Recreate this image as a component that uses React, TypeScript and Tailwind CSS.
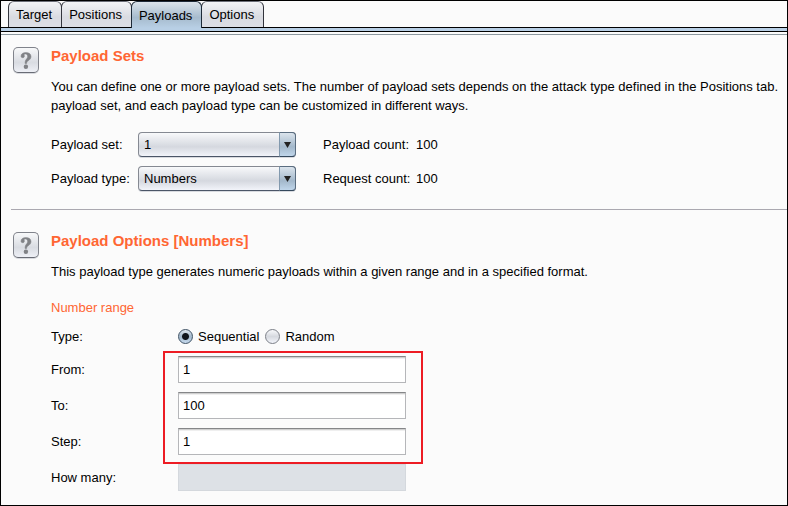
import { useState } from "react"
import type { ReactNode } from "react"
import clsx from "clsx"

const tabs = ["Target", "Positions", "Payloads", "Options"]

const HelpButton = () => (
  <button
    type="button"
    aria-label="Help"
    className="size-[26px] shrink-0 rounded-[5px] border border-[#80838b] border-b-[#696c75] bg-linear-to-b from-[#f8f9fa] via-[#d9dce2] via-60% to-[#eef0f6] shadow-[0_1px_0_#d8dadf]"
  >
    <svg viewBox="0 0 24 24" className="size-6">
      <path
        d="M7 8.2C7 5.9 9 4.6 11.8 4.6c3.3 0 5.2 1.5 5.2 4 0 2-1.2 3.1-2.7 4.1-1.2.8-1.7 1.5-1.7 2.9h-1.5c-.1-2.4.5-3.4 1.4-4.5.8-.9 1.1-1.5 1.1-2.6 0-1.6-.8-2.5-2.1-2.5-.9 0-1.4.3-1.4.8 0 .4.3.7.3 1.4 0 .9-.7 1.5-1.7 1.5S7 9.1 7 8.2z"
        fill="#808286"
        stroke="#808286"
        strokeWidth="0.5"
      />
      <circle cx="11.9" cy="18.7" r="2.2" fill="#808286" />
    </svg>
  </button>
)

const Section = ({ title, children }: { title: string; children: ReactNode }) => (
  <section className="flex items-start gap-3 pl-3">
    <HelpButton />
    <div className="min-w-0 flex-1">
      <h2 className="text-[15px] leading-[18px] font-bold text-[#ff6633]">{title}</h2>
      {children}
    </div>
  </section>
)

type SelectRowProps = {
  id: string
  label: string
  options: string[]
  countLabel: string
  count: number
}

const SelectRow = ({ id, label, options, countLabel, count }: SelectRowProps) => (
  <div className="flex h-[25px] items-center">
    <label htmlFor={id} className="w-[87px]">{label}</label>
    <div className="relative w-[158px]">
      <select
        id={id}
        className="block h-[25px] w-full appearance-none rounded border border-[#858992] border-b-[#4b5567] bg-linear-to-b from-[#f8f9fb] via-[#d5d8df] via-60% to-[#f2f4fa] pl-[5px] shadow-[0_1px_0_#d8dadf]"
      >
        {options.map((option) => (
          <option key={option}>{option}</option>
        ))}
      </select>
      <span className="pointer-events-none absolute inset-y-0 right-0 flex w-[17px] items-center justify-center rounded-r border border-[#5a6d80] border-b-[#34485c] border-l-[#8299ae] bg-linear-to-b from-[#dbe4ec] via-[#a3b8cb] via-60% to-[#c0d6eb]">
        <svg viewBox="0 0 7 6" className="h-1.5 w-[7px]">
          <path d="M0 0h7L3.5 6z" fill="#222" />
        </svg>
      </span>
    </div>
    <span className="ml-[27px] w-[93px]">{countLabel}</span>
    <span>{count}</span>
  </div>
)

const TextRow = ({ id, label, value, disabled }: { id: string; label: string; value: string; disabled?: boolean }) => (
  <div className="flex items-center">
    <label htmlFor={id} className="w-[127px]">{label}</label>
    <input
      id={id}
      type="text"
      defaultValue={value}
      disabled={disabled}
      className="h-[27px] w-[228px] border border-[#b5b6b9] border-t-[#858688] bg-white px-1 shadow-[inset_0_1px_0_#cfcfcf,inset_0_2px_0_#efefef] disabled:border-[#d4d8dd] disabled:bg-[#dde1e6] disabled:shadow-none"
    />
  </div>
)

const RadioOption = ({ label, checked }: { label: string; checked?: boolean }) => (
  <label className="flex items-center gap-[5px]">
    <input
      type="radio"
      name="type"
      defaultChecked={checked}
      className="size-[15px] appearance-none rounded-full border border-[#7b7f87] bg-linear-to-b from-[#f8f9fb] via-[#d6d9df] to-[#f2f4fa] checked:border-[#3f5265] checked:bg-[radial-gradient(circle,#10151b_0_3px,transparent_4px),linear-gradient(#dfe7ee,#a3b8cb,#c6daee)]"
    />
    {label}
  </label>
)

const App = () => {
  const [active, setActive] = useState("Payloads")

  return (
    <main className="min-h-screen overflow-hidden border border-black bg-[#fbfbfb] font-['Liberation_Sans',Arial,sans-serif] text-[13px] leading-[19px] text-black">
      <nav className="flex px-[7px]">
        {tabs.map((tab) => (
          <button
            key={tab}
            type="button"
            onClick={() => setActive(tab)}
            className={clsx(
              "-mr-px h-[26px] rounded-t-md border border-b-0 pr-[9px] pl-[7px]",
              tab === active
                ? "relative -mb-px h-[27px] border-[#1d2a38] bg-linear-to-b from-[#dae3eb] via-[#a6bbcd] via-60% to-[#b8cfe5]"
                : "border-[#33353d] border-t-[#6b6e77] bg-linear-to-b from-[#f3f4f6] via-[#d9dbe1] via-60% to-[#dcdee5]"
            )}
          >
            {tab}
          </button>
        ))}
      </nav>
      <div className="h-[5px] border-y border-black bg-[#b8cfe5]" />
      <div className="h-[3px] border-b border-[#8c989f] bg-[#fbfbfb]" />

      <div className="pt-3">
        <Section title="Payload Sets">
          <p className="mt-3 whitespace-nowrap">
            You can define one or more payload sets. The number of payload sets depends on the attack type defined in the Positions tab.
            <br />
            payload set, and each payload type can be customized in different ways.
          </p>
          <div className="mt-[17px] flex flex-col gap-[9px]">
            <SelectRow id="payload-set" label="Payload set:" options={["1"]} countLabel="Payload count:" count={100} />
            <SelectRow id="payload-type" label="Payload type:" options={["Numbers"]} countLabel="Request count:" count={100} />
          </div>
        </Section>

        <hr className="mt-[18px] mb-[22px] ml-[10px] border-[#aaa8b0]" />

        <Section title="Payload Options [Numbers]">
          <p className="mt-3">This payload type generates numeric payloads within a given range and in a specified format.</p>
          <h3 className="mt-[17px] text-[#ff6633]">Number range</h3>
          <div className="mt-[10px] flex items-center" role="radiogroup" aria-labelledby="type-label">
            <span id="type-label" className="w-[127px]">Type:</span>
            <div className="flex gap-[6px]">
              <RadioOption label="Sequential" checked />
              <RadioOption label="Random" />
            </div>
          </div>
          <div className="relative mt-[10px] flex flex-col gap-[9px]">
            <TextRow id="from" label="From:" value="1" />
            <TextRow id="to" label="To:" value="100" />
            <TextRow id="step" label="Step:" value="1" />
            <div className="pointer-events-none absolute -top-[5px] -bottom-[9px] left-[112px] w-[260px] border-2 border-[#ed1c24]" />
          </div>
          <div className="mt-[9px]">
            <TextRow id="how-many" label="How many:" value="" disabled />
          </div>
        </Section>
      </div>
    </main>
  )
}

export default App
